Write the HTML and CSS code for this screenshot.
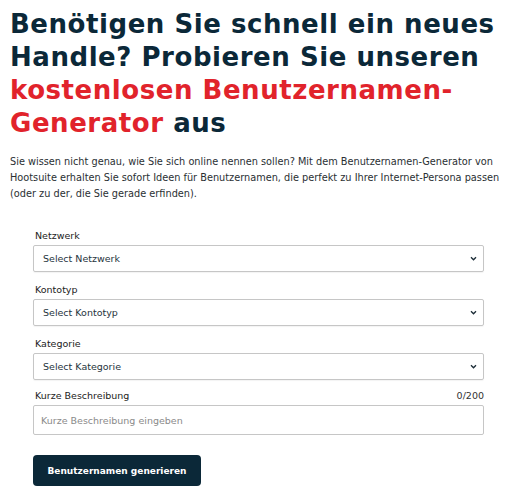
FILE: index.html
```html
<!DOCTYPE html>
<html lang="de">
<head>
<meta charset="utf-8">
<link rel="stylesheet" href="styles.css">
</head>
<body>
<main class="page">
  <h1 class="title">Benötigen Sie schnell ein neues<br>Handle? Probieren Sie unseren<br><span class="accent">kostenlosen Benutzernamen-<br>Generator</span> aus</h1>
  <p class="intro">Sie wissen nicht genau, wie Sie sich online nennen sollen? Mit dem Benutzernamen-Generator von<br>Hootsuite erhalten Sie sofort Ideen für Benutzernamen, die perfekt zu Ihrer Internet-Persona passen<br>(oder zu der, die Sie gerade erfinden).</p>
  <form class="form">
    <div class="field">
      <label class="label">Netzwerk</label>
      <div class="select"><span>Select Netzwerk</span><svg class="chev" viewBox="0 0 8 6" width="7" height="5"><path d="M1 1.5 L4 4.5 L7 1.5" fill="none" stroke="#1b2b36" stroke-width="1.6"/></svg></div>
    </div>
    <div class="field">
      <label class="label">Kontotyp</label>
      <div class="select"><span>Select Kontotyp</span><svg class="chev" viewBox="0 0 8 6" width="7" height="5"><path d="M1 1.5 L4 4.5 L7 1.5" fill="none" stroke="#1b2b36" stroke-width="1.6"/></svg></div>
    </div>
    <div class="field field-tight">
      <label class="label">Kategorie</label>
      <div class="select"><span>Select Kategorie</span><svg class="chev" viewBox="0 0 8 6" width="7" height="5"><path d="M1 1.5 L4 4.5 L7 1.5" fill="none" stroke="#1b2b36" stroke-width="1.6"/></svg></div>
    </div>
    <div class="field">
      <div class="label-row"><label class="label">Kurze Beschreibung</label><span class="count">0/200</span></div>
      <div class="input">Kurze Beschreibung eingeben</div>
    </div>
    <button type="button" class="btn">Benutzernamen generieren</button>
  </form>
</main>
</body>
</html>
```
FILE: styles.css
```css
* { box-sizing: border-box; }
html, body { margin: 0; padding: 0; background: #fff; }
body { font-family: "DejaVu Sans", "Noto Sans", sans-serif; color: #1f2a30; }
.page { padding: 8px 10px 0 10px; }
.title {
  margin: 0;
  font-size: 26px;
  line-height: 33px;
  font-weight: 700;
  color: #0b2838;
  letter-spacing: 0.55px;
}
.accent { color: #e1232b; }
.intro {
  margin: 14px 0 0 0;
  font-size: 9.75px;
  line-height: 16px;
  color: #2a2f33;
}
.form {
  margin: 27px 0 0 23px;
  width: 451px;
  display: flex;
  flex-direction: column;
}
.field { display: flex; flex-direction: column; margin-bottom: 11px; }
.field-tight { margin-bottom: 9px; }
.label { font-size: 9.5px; line-height: 14px; color: #222; margin-bottom: 2px; padding-left: 2px; }
.label-row { display: flex; justify-content: space-between; align-items: baseline; }
.count { font-size: 9.5px; line-height: 14px; color: #333; }
.select {
  height: 27px;
  border: 1px solid #c6c6c6;
  border-radius: 2px;
  display: flex;
  align-items: center;
  justify-content: space-between;
  padding: 0 6px 0 9px;
  font-size: 9.5px;
  color: #26343d;
  box-shadow: 0 1px 1px rgba(0,0,0,0.05);
}
.input {
  height: 30px;
  border: 1px solid #c6c6c6;
  border-radius: 2px;
  display: flex;
  align-items: center;
  padding: 0 7px;
  font-size: 9.5px;
  color: #8a8a8a;
}
.btn {
  margin-top: 9px;
  width: 168px;
  height: 31px;
  border: 0;
  border-radius: 4px;
  background: #0b2838;
  color: #fff;
  font-family: "DejaVu Sans", sans-serif;
  font-weight: 700;
  font-size: 9px;
  padding: 0;
}
```
